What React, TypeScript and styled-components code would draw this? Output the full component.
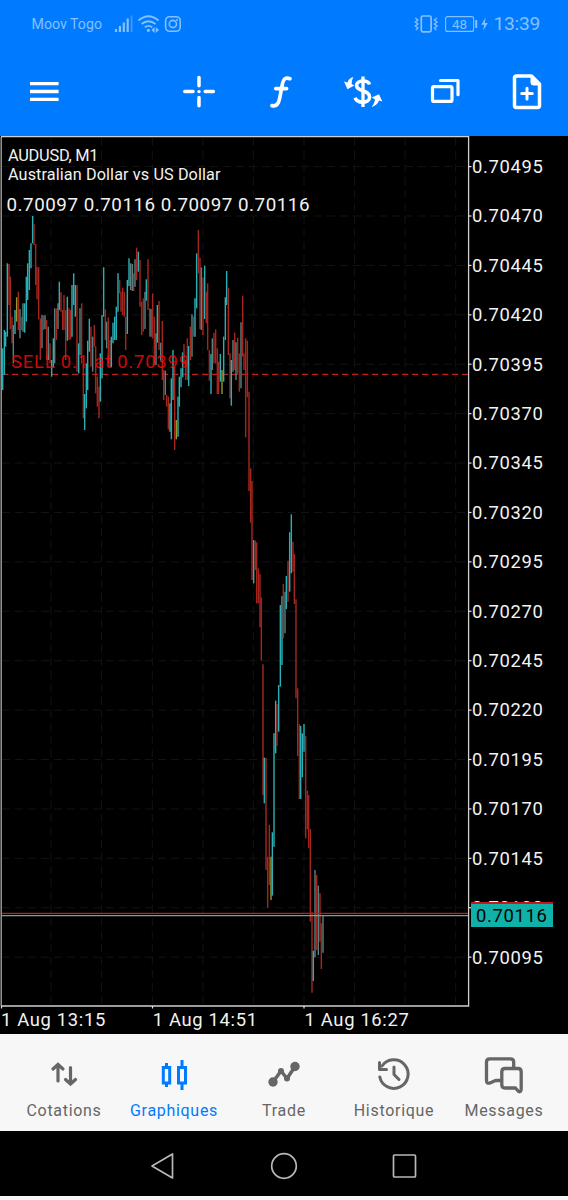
import React from 'react';
import styled, { createGlobalStyle } from 'styled-components';

const GlobalStyle = createGlobalStyle`
  * { box-sizing: border-box; }
  body { margin: 0; background: #f7f7f7; font-family: Roboto, sans-serif; }
  svg { display: block; flex: none; overflow: visible; }
`;

const Screen = styled.div`
  width: 568px;
  height: 1200px;
  display: flex;
  flex-direction: column;
  background: #f7f7f7;
`;

const Header = styled.header`
  height: 136px;
  background: #007aff;
  display: flex;
  flex-direction: column;
`;

const StatusBar = styled.div`
  height: 48px;
  padding: 0 28px 0 31.5px;
  display: flex;
  align-items: center;
  justify-content: space-between;
  color: #85c0ff;
`;

const StatusGroup = styled.div`
  display: flex;
  align-items: center;
`;

const Carrier = styled.span`
  width: 81px;
  font-size: 14.2px;
  letter-spacing: 0;
  white-space: nowrap;
`;

const Clock = styled.span`
  margin-left: 5px;
  font-size: 19.2px;
  line-height: 24px;
  letter-spacing: -0.25px;
`;

const Toolbar = styled.div`
  height: 88px;
  padding: 0 21px 0 24px;
  display: flex;
  align-items: center;
  justify-content: space-between;
`;

const ToolGroup = styled.div`
  display: flex;
  gap: 42.1px;
`;

const ToolButton = styled.button`
  width: 40px;
  height: 40px;
  padding: 0;
  border: 0;
  background: none;
`;

const ChartPanel = styled.main`
  height: 897.5px;
  background: #000;
  color: #f2f2f2;
  display: grid;
  grid-template-columns: 471px 1fr;
  grid-template-rows: 873px 1fr;
  font-size: 18.4px;
  letter-spacing: 0.66px;
`;

const PriceAxis = styled.div`
  position: relative;
  padding: 6px 0 0 1px;
  display: flex;
  flex-direction: column;
`;

const PriceLabel = styled.span`
  height: 49.41px;
  line-height: 49.41px;
  margin: 0;
  white-space: nowrap;
`;

const CurrentPrice = styled.div`
  position: absolute;
  left: 0;
  top: 766px;
  width: 82px;
  height: 25px;
  padding-left: 5px;
  border-top: 2.5px solid #c8161a;
  background: #10b1a8;
  color: #000;
  line-height: 24px;
`;

const TimeAxis = styled.div`
  grid-column: 1 / -1;
  padding-left: 1px;
  display: flex;
  line-height: 21px;
`;

const TimeLabel = styled.span`
  width: 151.8px;
  white-space: nowrap;
`;

const TabBar = styled.nav`
  height: 97.5px;
  padding: 0 9px;
  display: grid;
  grid-template-columns: repeat(5, 110px);
  background: #f7f7f7;
`;

const Tab = styled.div<{ $active?: boolean }>`
  display: flex;
  flex-direction: column;
  align-items: center;
  padding-top: 20.5px;
  color: ${(p) => (p.$active ? '#007aff' : '#666')};
  font-size: 16px;
  line-height: 20px;
  letter-spacing: 0.7px;
`;

const TabLabel = styled.span`
  margin-top: 7px;
`;

const SystemNav = styled.div`
  height: 65px;
  background: #000;
  display: flex;
  justify-content: center;
  align-items: center;
  gap: 80px;
  padding-top: 4px;
`;

type Tone = 'T' | 'R' | 'G' | 'Y';
type Bar = [number, number, number, Tone];

const tones: Record<Tone, string> = { T: '#2bafb4', R: '#a5261f', G: '#5a8080', Y: '#94982e' };

// Each run lists [x, high, low, tone] in thirds of a pixel from its own origin.
const runs: { x: number; y: number; bars: Bar[] }[] = [
  {
    x: 0,
    y: 130,
    bars: [
      [8, 655, 780, 'T'], [13, 600, 735, 'T'], [17, 605, 650, 'T'], [22, 400, 620, 'T'], [27, 402, 525, 'R'],
      [31, 440, 598, 'R'], [36, 560, 640, 'R'], [40, 585, 700, 'G'], [45, 540, 612, 'T'], [50, 502, 575, 'Y'],
      [55, 485, 600, 'R'], [60, 537, 625, 'G'], [65, 560, 600, 'R'], [69, 520, 605, 'G'], [74, 520, 608, 'T'],
      [79, 440, 575, 'T'], [83, 400, 510, 'T'], [88, 360, 480, 'T'], [93, 340, 415, 'T'], [98, 258, 340, 'T'],
      [102, 282, 345, 'R'], [107, 342, 465, 'R'], [111, 410, 508, 'R'], [116, 412, 568, 'R'], [121, 565, 690, 'R'],
      [126, 555, 655, 'G'], [131, 556, 600, 'R'], [135, 556, 597, 'G'], [140, 570, 690, 'R'], [145, 590, 690, 'G'],
      [150, 640, 700, 'R'], [155, 690, 740, 'T'], [160, 625, 712, 'T'], [164, 535, 700, 'G'], [169, 535, 630, 'R'],
      [174, 520, 597, 'G'], [178, 455, 540, 'T'], [183, 487, 545, 'R'], [188, 540, 600, 'R'], [192, 495, 600, 'R'],
      [197, 540, 690, 'R'], [202, 500, 632, 'T'], [207, 535, 630, 'R'], [212, 540, 628, 'R'], [216, 465, 620, 'T'],
      [221, 430, 525, 'T'], [226, 465, 560, 'T'], [231, 465, 725, 'R'], [236, 640, 730, 'T'], [240, 535, 675, 'G'],
      [245, 520, 700, 'R'], [250, 700, 865, 'R'], [254, 792, 900, 'T'], [259, 700, 835, 'T'], [263, 632, 780, 'T'],
      [268, 566, 665, 'T'], [273, 590, 710, 'R'], [278, 620, 725, 'G'], [283, 585, 650, 'R'], [287, 648, 790, 'R'],
      [292, 740, 830, 'R'], [297, 770, 865, 'R'], [301, 670, 815, 'T'], [306, 555, 745, 'T'], [311, 412, 560, 'T'],
      [316, 538, 630, 'R'], [320, 575, 655, 'G'], [325, 562, 700, 'R'], [330, 630, 710, 'R'], [334, 620, 712, 'T'],
      [339, 578, 640, 'T'], [344, 560, 630, 'T'], [349, 530, 630, 'T'], [354, 430, 545, 'T'], [359, 450, 490, 'R'],
      [363, 485, 545, 'R'], [368, 473, 555, 'R'], [373, 485, 560, 'R'], [377, 560, 660, 'R'], [382, 450, 612, 'T'],
      [387, 385, 468, 'T'], [392, 400, 480, 'G'], [397, 402, 483, 'G'], [401, 430, 483, 'R'], [405, 388, 470, 'G'],
      [410, 353, 450, 'R'], [415, 365, 425, 'T'], [420, 390, 530, 'R'], [425, 515, 615, 'R'], [430, 505, 605, 'R'],
      [435, 485, 597, 'G'], [439, 448, 512, 'T'], [444, 388, 540, 'R'], [449, 535, 620, 'R'],
    ],
  },
  {
    x: 150,
    y: 190,
    bars: [
      [3, 357, 440, 'G'], [8, 310, 445, 'R'], [13, 380, 525, 'R'], [18, 430, 525, 'G'], [22, 345, 458, 'T'],
      [27, 333, 480, 'R'], [32, 458, 512, 'G'], [37, 393, 570, 'R'], [41, 540, 630, 'R'], [46, 542, 615, 'G'],
      [50, 615, 650, 'R'], [55, 620, 718, 'R'], [60, 640, 725, 'T'], [64, 565, 748, 'T'], [69, 480, 630, 'T'],
      [74, 530, 780, 'R'], [79, 690, 748, 'Y'], [84, 620, 740, 'T'], [88, 560, 650, 'T'], [93, 535, 592, 'T'],
      [98, 487, 562, 'T'], [102, 462, 525, 'R'], [107, 510, 570, 'R'], [112, 445, 570, 'R'], [116, 468, 588, 'T'],
      [121, 410, 510, 'R'], [126, 373, 500, 'G'], [131, 380, 440, 'R'], [135, 325, 440, 'T'], [140, 190, 355, 'T'],
      [145, 120, 250, 'R'], [150, 203, 417, 'R'], [154, 232, 420, 'G'], [159, 262, 435, 'R'], [164, 227, 387, 'T'],
      [169, 305, 400, 'R'], [173, 280, 480, 'R'], [178, 480, 572, 'R'], [183, 492, 612, 'T'], [187, 445, 540, 'G'],
      [192, 428, 520, 'R'], [197, 418, 520, 'R'], [202, 475, 612, 'R'], [206, 515, 612, 'R'], [211, 492, 575, 'T'],
      [216, 540, 612, 'Y'], [221, 440, 575, 'T'], [226, 322, 450, 'T'], [230, 243, 345, 'T'], [235, 293, 495, 'R'],
      [240, 490, 625, 'R'], [244, 510, 647, 'T'], [249, 450, 545, 'G'], [254, 428, 540, 'R'], [258, 457, 570, 'G'],
      [263, 443, 550, 'R'], [268, 490, 605, 'R'], [273, 397, 595, 'G'], [278, 317, 500, 'R'], [282, 490, 540, 'R'],
      [287, 445, 742, 'R'], [292, 452, 622, 'R'], [297, 605, 903, 'R'], [302, 835, 998, 'R'],
    ],
  },
  {
    x: 230,
    y: 500,
    bars: [
      [66, -57, 240, 'R'], [71, 120, 250, 'T'], [76, 122, 210, 'R'], [80, 127, 310, 'R'], [85, 205, 310, 'R'],
      [90, 222, 382, 'R'], [94, 292, 482, 'R'], [99, 493, 885, 'R'], [103, 773, 910, 'T'], [108, 774, 1110, 'R'],
      [113, 1070, 1223, 'R'], [118, 975, 1155, 'R'], [123, 1070, 1200, 'Y'], [127, 997, 1187, 'T'],
      [132, 700, 1040, 'T'], [137, 602, 760, 'T'], [141, 612, 738, 'R'], [146, 555, 695, 'T'], [151, 315, 560, 'T'],
      [156, 288, 495, 'T'], [160, 252, 415, 'R'], [165, 275, 400, 'G'], [169, 228, 327, 'T'], [174, 182, 305, 'R'],
      [179, 97, 275, 'T'], [184, 43, 220, 'T'], [189, 125, 215, 'R'], [193, 162, 312, 'R'], [198, 298, 595, 'R'],
      [203, 565, 768, 'R'], [208, 672, 897, 'R'], [212, 678, 897, 'T'], [217, 700, 832, 'T'], [222, 672, 755, 'T'],
      [227, 708, 1015, 'R'], [232, 872, 988, 'R'], [236, 885, 1045, 'R'], [241, 987, 1265, 'R'],
      [246, 1237, 1478, 'R'], [250, 1352, 1443, 'T'], [255, 1110, 1372, 'G'], [260, 1125, 1350, 'R'],
      [265, 1157, 1365, 'G'], [270, 1180, 1325, 'R'], [274, 1270, 1407, 'R'], [279, 1245, 1358, 'G'],
    ],
  },
];

const prices = [
  '0.70495', '0.70470', '0.70445', '0.70420', '0.70395', '0.70370', '0.70345', '0.70320', '0.70295',
  '0.70270', '0.70245', '0.70220', '0.70195', '0.70170', '0.70145', '0.70120', '0.70095',
];
const times = ['1 Aug 13:15', '1 Aug 14:51', '1 Aug 16:27'];
const columns = [51, 101.6, 152.3, 202.9, 253.4, 304, 354.6, 405.1, 455.7];
const rowY = (i: number) => 166.6 + i * 49.41;

function Chart() {
  return (
    <svg width="471" height="873" viewBox="0 136 471 873">
      <g stroke="#131313" strokeWidth="1" strokeDasharray="8 5">
        {columns.map((x) => <path key={x} d={`M${x} 138V1005`} />)}
        {prices.map((p, i) => <path key={p} d={`M2 ${rowY(i)}H468`} />)}
      </g>
      <path d="M2 374.3H468" stroke="#c01d1d" strokeWidth="1.3" strokeDasharray="6.3 3.7" />
      {runs.map((run) => (
        <g key={run.x} transform={`translate(${run.x} ${run.y}) scale(.33333)`}>
          {run.bars.map(([x, high, low, tone]) => (
            <path key={x} d={`M${x} ${high}V${low}`} stroke={tones[tone]} strokeWidth="4.3" />
          ))}
        </g>
      ))}
      <text x="11" y="368.2" fill="#f00c0c" fillOpacity=".85" fontSize="18.4" letterSpacing="0" textLength="178">SELL 0.1 at 0.70399</text>
      <path d="M2 913.4H468" stroke="#b3201f" strokeWidth="1.3" />
      <path d="M2 915.6H468" stroke="#7b9b9c" strokeWidth="1.3" />
      <path d="M1.2 137V1006" stroke="#a0a0a0" strokeWidth="1.4" />
      <path d="M1 136.7H468.6V1006H1" fill="none" stroke="#cfcfcf" strokeWidth="1.3" />
      <g stroke="#e0e0e0" strokeWidth="1.2">
        {prices.map((p, i) => <path key={p} d={`M468 ${rowY(i)}H471.5`} />)}
        <path d="M1.5 1006V1008.5M152.5 1006V1008.5M304 1006V1008.5" />
      </g>
      <g fill="#f2f2f2" letterSpacing="0">
        <text x="8" y="161.2" fontSize="16.4" textLength="90.5">AUDUSD, M1</text>
        <text x="8" y="180.4" fontSize="16.2" textLength="212.5">Australian Dollar vs US Dollar</text>
        <text x="6.5" y="210.8" fontSize="18.8" textLength="303">0.70097 0.70116 0.70097 0.70116</text>
      </g>
    </svg>
  );
}

function StatusIcons() {
  return (
    <svg width="70" height="20" viewBox="113 14 70 20" fill="none" stroke="currentColor">
      <path d="M116 32v-3M119.9 32v-6M123.8 32v-9.5M127.7 32v-13.5" strokeWidth="2.2" />
      <path d="M131.6 32V15.5" strokeWidth="2" opacity=".4" />
      <path d="M138.5 20.5q10-8.5 20 0M141.5 24q7-5.6 14 0M144.8 27.3q3.7-2.8 7.4 0" strokeWidth="1.9" />
      <circle cx="148.4" cy="30.3" r="1.6" fill="currentColor" stroke="none" />
      <path d="M154.6 27v6l-3.2-3zM155.8 27v6l3.2-3z" fill="currentColor" stroke="none" />
      <rect x="165.6" y="16.7" width="14.6" height="14.6" rx="4" strokeWidth="1.6" />
      <circle cx="172.9" cy="24" r="3.6" strokeWidth="1.6" />
      <circle cx="177" cy="19.9" r="1" fill="currentColor" stroke="none" />
    </svg>
  );
}

function BatteryIcons() {
  return (
    <svg width="74" height="20" viewBox="414 14 74 20" fill="none" stroke="currentColor">
      <rect x="421.3" y="16" width="9.8" height="15.8" rx="1.5" strokeWidth="1.7" />
      <path d="M415.3 18l2.6 2-2.6 2 2.6 2-2.6 2 2.6 2-2 2M437 18l-2.6 2 2.6 2-2.6 2 2.6 2-2.6 2 2 2" strokeWidth="1.4" />
      <rect x="445.6" y="16.6" width="28" height="14.8" rx="2" strokeWidth="1.1" />
      <path d="M476.2 20v8" strokeWidth="2" />
      <path d="M485.6 17.6l-4.3 7.2h2.9l-1 5.8 4.6-7.6h-3z" fill="currentColor" stroke="none" />
      <text x="459.6" y="28.8" fontSize="13.4" fill="currentColor" stroke="none" textAnchor="middle">48</text>
    </svg>
  );
}

const ToolIcon = ({ children }: { children: React.ReactNode }) => (
  <svg width="40" height="40" viewBox="0 0 40 40" fill="none" stroke="#fff" strokeWidth="3" strokeLinecap="round" strokeLinejoin="round">
    {children}
  </svg>
);

export default function App() {
  return (
    <Screen>
      <GlobalStyle />
      <Header>
        <StatusBar>
          <StatusGroup><Carrier>Moov Togo</Carrier><StatusIcons /></StatusGroup>
          <StatusGroup><BatteryIcons /><Clock>13:39</Clock></StatusGroup>
        </StatusBar>
        <Toolbar>
          <ToolButton aria-label="Menu">
            <ToolIcon><path d="M6 11.6H34.6M6 19.5H34.6M6 27.4H34.6" strokeWidth="3.3" strokeLinecap="butt" /></ToolIcon>
          </ToolButton>
          <ToolGroup>
            <ToolButton aria-label="Crosshair">
              <ToolIcon>
                <path d="M20 5.5V13.8M20 25.6V33.8M5.8 19.6H14M26.2 19.6H34.4" strokeWidth="3.5" />
                <circle cx="20" cy="19.6" r="1.7" fill="#fff" stroke="none" />
              </ToolIcon>
            </ToolButton>
            <ToolButton aria-label="Indicators">
              <ToolIcon>
                <path d="M29 6.7C24.6 5 22.4 7 21.6 11L18.6 26.5C17.6 31.8 15.6 34.6 11 33.6M14.8 16.6H25.6" strokeWidth="3.7" />
              </ToolIcon>
            </ToolButton>
            <ToolButton aria-label="Trade">
              <ToolIcon>
                <path d="M20 4.5V35" strokeWidth="3.3" strokeLinecap="butt" />
                <path d="M26.6 12.5C25 8 13.6 7.5 13.6 13.5C13.6 20 26.6 17.5 26.6 25C26.6 31.5 14.6 32 12 25.8" strokeWidth="3.6" strokeLinecap="butt" />
                <path d="M10.5 5C7 6 5.3 7.5 4.6 10.5L1 9.5L4.5 17.3L11.3 13.5L8.7 12C8.7 9.5 9 7.5 10.5 5Z" fill="#fff" stroke="none" />
                <path d="M28.5 35C32.5 34 35 31.5 36 28.5L39.3 29.5L36 22.2L28.7 25.5L32 27.5C31.5 30.5 30.5 32.5 28.5 35Z" fill="#fff" stroke="none" />
              </ToolIcon>
            </ToolButton>
            <ToolButton aria-label="Windows">
              <ToolIcon>
                <rect x="7.5" y="14.7" width="19.5" height="14.7" rx="1.5" strokeWidth="3.2" />
                <path d="M15.5 8.5H33V22.7" strokeWidth="3.2" />
              </ToolIcon>
            </ToolButton>
            <ToolButton aria-label="New order">
              <ToolIcon>
                <path d="M24.5 3.9H9.5Q7.5 3.9 7.5 5.9V33.4Q7.5 35.4 9.5 35.4H30.5Q32.5 35.4 32.5 33.4V12L24.5 3.9Z" strokeWidth="3.5" />
                <path d="M24.5 4V10Q24.5 12.5 27 12.5H32.6Z" fill="#fff" strokeWidth="2" />
                <path d="M20 16.3V27M14.7 21.6H25.3" strokeWidth="3" />
              </ToolIcon>
            </ToolButton>
          </ToolGroup>
        </Toolbar>
      </Header>

      <ChartPanel>
        <Chart />
        <PriceAxis>
          {prices.map((p) => <PriceLabel key={p}>{p}</PriceLabel>)}
          <CurrentPrice>0.70116</CurrentPrice>
        </PriceAxis>
        <TimeAxis>{times.map((t) => <TimeLabel key={t}>{t}</TimeLabel>)}</TimeAxis>
      </ChartPanel>

      <TabBar>
        <Tab>
          <svg width="40" height="40" viewBox="0 0 40 40" fill="none" stroke="currentColor" strokeWidth="3.2" strokeLinecap="round">
            <path d="M14 27V11M9 15L14 10.5L19 15M26.5 13.5V30M21.5 25.5L26.5 30L31.5 25.5" />
          </svg>
          <TabLabel>Cotations</TabLabel>
        </Tab>
        <Tab $active>
          <svg width="40" height="40" viewBox="0 0 40 40" fill="none" stroke="currentColor" strokeWidth="3">
            <path d="M9.3 13.5H15.7V29H9.3ZM24.5 13.5H31.5V29H24.5ZM12.5 9V13M12.5 29.5V33M28 6V13M28 29.5V36" />
          </svg>
          <TabLabel>Graphiques</TabLabel>
        </Tab>
        <Tab>
          <svg width="40" height="40" viewBox="0 0 40 40" fill="none" stroke="currentColor" strokeWidth="3.5" strokeLinejoin="round">
            <path d="M9 28L17 17L23 24.5L31 12.5" />
            <circle cx="9" cy="28" r="4.7" fill="currentColor" stroke="none" />
            <circle cx="31" cy="12.5" r="4.7" fill="currentColor" stroke="none" />
            <circle cx="17" cy="17" r="3" fill="currentColor" stroke="none" />
            <circle cx="23" cy="24.5" r="3" fill="currentColor" stroke="none" />
          </svg>
          <TabLabel>Trade</TabLabel>
        </Tab>
        <Tab>
          <svg width="40" height="40" viewBox="0 0 40 40" fill="none" stroke="currentColor" strokeWidth="3" strokeLinecap="round" strokeLinejoin="round">
            <path d="M5.8 23A14.3 14.3 0 1 0 8 12M5.5 8.5V15.5H12.5M20 13V20.5L25 25.5" />
          </svg>
          <TabLabel>Historique</TabLabel>
        </Tab>
        <Tab>
          <svg width="40" height="40" viewBox="0 0 40 40" fill="none" stroke="currentColor" strokeWidth="3.3" strokeLinejoin="round">
            <path d="M17 26.5H11.5L6 29Q2.500 30 2.500 26.500V8Q2.500 4.800 5.700 4.800H26.500Q29.700 4.800 29.700 8V14" />
            <path d="M21 14.5H34Q37.2 14.5 37.2 17.7V35Q37.2 38.5 34.5 37.5L31.5 34H21Q17.8 34 17.8 30.8V17.7Q17.8 14.5 21 14.5Z" />
          </svg>
          <TabLabel>Messages</TabLabel>
        </Tab>
      </TabBar>

      <SystemNav>
        <svg width="40" height="40" viewBox="0 0 40 40" fill="none" stroke="#b8b8b8" strokeWidth="1.7" strokeLinejoin="round">
          <path d="M28.5 8V32L8 20Z" />
        </svg>
        <svg width="40" height="40" viewBox="0 0 40 40" fill="none" stroke="#b8b8b8" strokeWidth="1.7">
          <circle cx="20" cy="20" r="12.3" />
        </svg>
        <svg width="40" height="40" viewBox="0 0 40 40" fill="none" stroke="#b8b8b8" strokeWidth="1.7">
          <rect x="9.5" y="9" width="22" height="22" rx="1" />
        </svg>
      </SystemNav>
    </Screen>
  );
}
